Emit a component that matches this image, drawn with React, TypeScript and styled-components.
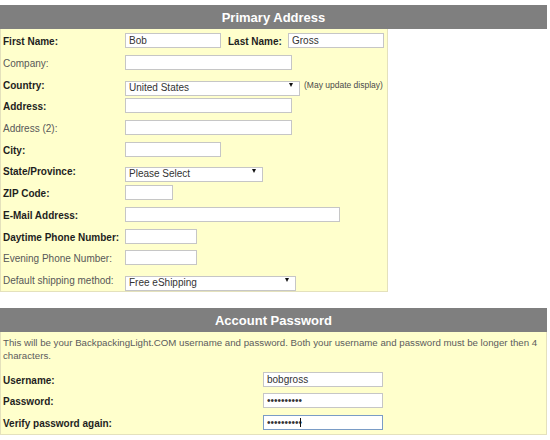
import styled, { createGlobalStyle } from "styled-components";

const GlobalStyle = createGlobalStyle`
  body {
    margin: 0;
    background: #ffffff;
    font-family: "Liberation Sans", Arial, sans-serif;
  }
`;

const Page = styled.div`
  width: 547px;
  padding-top: 5px;
  display: flex;
  flex-direction: column;
`;

const SectionHeader = styled.div<{ $gap?: number }>`
  height: 24px;
  margin-top: ${(p) => p.$gap ?? 0}px;
  background: #7f7f7f;
  color: #ffffff;
  font-weight: bold;
  font-size: 13px;
  display: flex;
  align-items: center;
  justify-content: center;
`;

const Panel = styled.div<{ $width: number }>`
  width: ${(p) => p.$width}px;
  box-sizing: border-box;
  background: #ffffcc;
  border: 1px solid #e4e1bc;
  border-top: none;
  padding: 1px 0 1px;
  display: flex;
  flex-direction: column;
`;

const Row = styled.div<{ $height?: number }>`
  height: ${(p) => p.$height ?? 21.7}px;
  display: flex;
  align-items: center;
`;

const Label = styled.div<{ $required?: boolean; $width: number }>`
  width: ${(p) => p.$width}px;
  flex-shrink: 0;
  box-sizing: border-box;
  padding: 2px 0 0 2px;
  font-size: 10px;
  font-weight: ${(p) => (p.$required ? "bold" : "normal")};
  color: ${(p) => (p.$required ? "#1e1e1e" : "#585858")};
  white-space: nowrap;
`;

const InlineLabel = styled.span`
  margin-left: 7px;
  padding-top: 2px;
  width: 60px;
  font-size: 10px;
  font-weight: bold;
  color: #1e1e1e;
`;

const TextInput = styled.input<{ $width: number; $focused?: boolean }>`
  width: ${(p) => p.$width}px;
  height: 15px;
  box-sizing: border-box;
  margin: 0;
  padding: 0 3px;
  border: 1px solid ${(p) => (p.$focused ? "#7a9cc6" : "#c6c6c6")};
  border-radius: 0;
  background: #ffffff;
  font-family: "Liberation Sans", Arial, sans-serif;
  font-size: 10px;
  color: #333333;
  outline: none;
`;

const FocusWrap = styled.div`
  position: relative;
  display: flex;

  &::after {
    content: "";
    position: absolute;
    left: 37px;
    top: 3px;
    width: 1px;
    height: 9px;
    background: #111111;
  }
`;

const SelectWrap = styled.div<{ $width: number }>`
  position: relative;
  width: ${(p) => p.$width}px;
  height: 15px;

  &::after {
    content: "";
    position: absolute;
    right: 7px;
    top: 6px;
    border-left: 2.5px solid transparent;
    border-right: 2.5px solid transparent;
    border-top: 4px solid #111111;
    pointer-events: none;
  }
`;

const Select = styled.select`
  appearance: none;
  width: 100%;
  height: 15px;
  box-sizing: border-box;
  margin: 0;
  padding: 0 3px 1px;
  border: 1px solid #c6c6c6;
  border-radius: 0;
  background: #ffffff;
  font-family: "Liberation Sans", Arial, sans-serif;
  font-size: 10px;
  line-height: 12px;
  color: #333333;
  outline: none;
`;

const Note = styled.span`
  margin-left: 4px;
  padding-top: 2px;
  font-size: 8.5px;
  color: #4a4a4a;
`;

const Intro = styled.p`
  margin: 3px 0 6px;
  padding: 0 2px;
  font-size: 9.7px;
  line-height: 13px;
  color: #5c5c5c;
`;

type Field = {
  label: string;
  required?: boolean;
  kind: "text" | "select";
  width: number;
  value?: string;
  note?: string;
};

const addressFields: Field[] = [
  { label: "Company:", kind: "text", width: 167 },
  { label: "Country:", required: true, kind: "select", width: 175, value: "United States", note: "(May update display)" },
  { label: "Address:", required: true, kind: "text", width: 167 },
  { label: "Address (2):", kind: "text", width: 167 },
  { label: "City:", required: true, kind: "text", width: 96 },
  { label: "State/Province:", required: true, kind: "select", width: 138, value: "Please Select" },
  { label: "ZIP Code:", required: true, kind: "text", width: 48 },
  { label: "E-Mail Address:", required: true, kind: "text", width: 215 },
  { label: "Daytime Phone Number:", required: true, kind: "text", width: 72 },
  { label: "Evening Phone Number:", kind: "text", width: 72 },
  { label: "Default shipping method:", kind: "select", width: 171, value: "Free eShipping" },
];

const AddressRow = ({ field }: { field: Field }) => (
  <Row>
    <Label $width={124} $required={field.required}>
      {field.label}
    </Label>
    {field.kind === "select" ? (
      <SelectWrap $width={field.width}>
        <Select defaultValue={field.value}>
          <option>{field.value}</option>
        </Select>
      </SelectWrap>
    ) : (
      <TextInput type="text" $width={field.width} defaultValue={field.value} />
    )}
    {field.note && <Note>{field.note}</Note>}
  </Row>
);

const App = () => {
  return (
    <>
      <GlobalStyle />
      <Page>
        <SectionHeader>Primary Address</SectionHeader>
        <Panel $width={388}>
          <Row>
            <Label $width={124} $required>
              First Name:
            </Label>
            <TextInput type="text" $width={96} defaultValue="Bob" />
            <InlineLabel>Last Name:</InlineLabel>
            <TextInput type="text" $width={96} defaultValue="Gross" />
          </Row>
          {addressFields.map((f) => (
            <AddressRow key={f.label} field={f} />
          ))}
        </Panel>

        <SectionHeader $gap={16}>Account Password</SectionHeader>
        <Panel $width={547}>
          <Intro>
            This will be your BackpackingLight.COM username and password. Both your username and
            password must be longer then 4 characters.
          </Intro>
          <Row $height={21.5}>
            <Label $width={262} $required>
              Username:
            </Label>
            <TextInput type="text" $width={120} defaultValue="bobgross" />
          </Row>
          <Row $height={21.5}>
            <Label $width={262} $required>
              Password:
            </Label>
            <TextInput type="password" $width={120} defaultValue="bobgross12" />
          </Row>
          <Row $height={21.5}>
            <Label $width={262} $required>
              Verify password again:
            </Label>
            <FocusWrap>
              <TextInput type="password" $width={120} $focused defaultValue="bobgross12" />
            </FocusWrap>
          </Row>
        </Panel>
      </Page>
    </>
  );
};

export default App;
